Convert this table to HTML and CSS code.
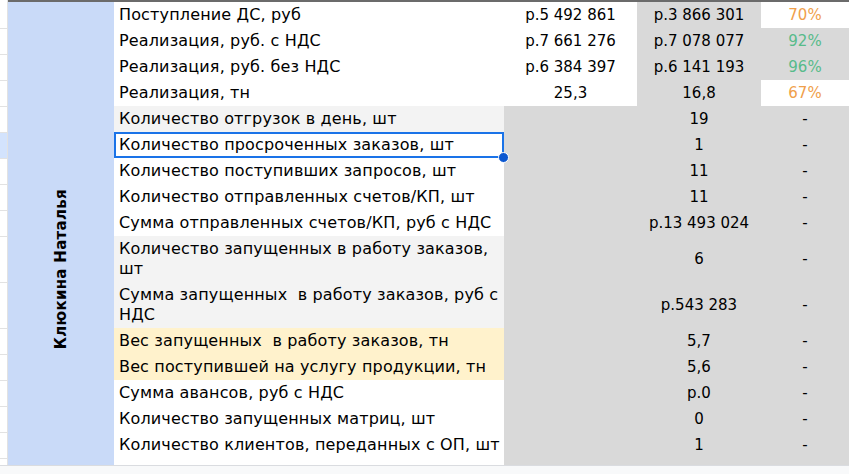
FILE: index.html
```html
<!DOCTYPE html>
<html lang="ru">
<head>
  <meta charset="UTF-8">
  <title>Отчёт менеджера</title>
  <link rel="stylesheet" href="styles.css">
</head>
<body>
  <div class="sheet">
    <div class="rowhead">
      <div class="rh first"></div>
      <div class="rh"></div>
      <div class="rh"></div>
      <div class="rh"></div>
      <div class="rh"></div>
      <div class="rh active"></div>
      <div class="rh"></div>
      <div class="rh"></div>
      <div class="rh"></div>
      <div class="rh tall"></div>
      <div class="rh tall"></div>
      <div class="rh"></div>
      <div class="rh"></div>
      <div class="rh"></div>
      <div class="rh"></div>
      <div class="rh"></div>
      <div class="rh rest"></div>
    </div>

    <div class="main">
      <div class="name"><span>Клюкина Наталья</span></div>

      <!-- money / weight rows -->
      <div class="label">Поступление ДС, руб</div>
      <div class="val white">р.5 492 861</div>
      <div class="val">р.3 866 301</div>
      <div class="val white pct orange">70%</div>

      <div class="label">Реализация, руб. с НДС</div>
      <div class="val white">р.7 661 276</div>
      <div class="val">р.7 078 077</div>
      <div class="val pct green">92%</div>

      <div class="label">Реализация, руб. без НДС</div>
      <div class="val white">р.6 384 397</div>
      <div class="val">р.6 141 193</div>
      <div class="val pct green">96%</div>

      <div class="label">Реализация, тн</div>
      <div class="val white">25,3</div>
      <div class="val">16,8</div>
      <div class="val white pct orange">67%</div>

      <!-- daily counters -->
      <div class="label light">Количество отгрузок в день, шт</div>
      <div class="val"></div>
      <div class="val">19</div>
      <div class="val">-</div>

      <div class="label selected">Количество просроченных заказов, шт<i class="handle"></i></div>
      <div class="val"></div>
      <div class="val">1</div>
      <div class="val">-</div>

      <div class="label">Количество поступивших запросов, шт</div>
      <div class="val"></div>
      <div class="val">11</div>
      <div class="val">-</div>

      <div class="label">Количество отправленных счетов/КП, шт</div>
      <div class="val"></div>
      <div class="val">11</div>
      <div class="val">-</div>

      <div class="label">Сумма отправленных счетов/КП, руб с НДС</div>
      <div class="val"></div>
      <div class="val">р.13 493 024</div>
      <div class="val">-</div>

      <div class="label light">Количество запущенных в работу заказов,<br>шт</div>
      <div class="val"></div>
      <div class="val">6</div>
      <div class="val">-</div>

      <div class="label light">Сумма запущенных &nbsp;в работу заказов, руб с<br>НДС</div>
      <div class="val"></div>
      <div class="val">р.543 283</div>
      <div class="val">-</div>

      <div class="label yellow">Вес запущенных &nbsp;в работу заказов, тн</div>
      <div class="val"></div>
      <div class="val">5,7</div>
      <div class="val">-</div>

      <div class="label yellow">Вес поступившей на услугу продукции, тн</div>
      <div class="val"></div>
      <div class="val">5,6</div>
      <div class="val">-</div>

      <div class="label">Сумма авансов, руб с НДС</div>
      <div class="val"></div>
      <div class="val">р.0</div>
      <div class="val">-</div>

      <div class="label">Количество запущенных матриц, шт</div>
      <div class="val"></div>
      <div class="val">0</div>
      <div class="val">-</div>

      <div class="label">Количество клиентов, переданных с ОП, шт</div>
      <div class="val"></div>
      <div class="val">1</div>
      <div class="val">-</div>

      <div class="label"></div>
      <div class="val"></div>
      <div class="val"></div>
      <div class="val"></div>
    </div>
  </div>
  <div class="hscroll"></div>
</body>
</html>
```

FILE: styles.css
```css
body {
  margin: 0;
  width: 849px;
  height: 474px;
  overflow: hidden;
  background: #fff;
  font-family: "DejaVu Sans", "Open Sans", sans-serif;
  font-size: 15px;
  color: #000;
}

.sheet {
  display: flex;
  height: 465px;
}

/* narrow column on the left with plain grid lines */
.rowhead {
  width: 8px;
  flex: none;
  border-right: 1px solid #e2e2e2;
  box-sizing: border-box;
}

.rh {
  height: 26px;
  border-bottom: 1px solid #e2e2e2;
  box-sizing: border-box;
}

.rh.first {
  height: 29px;
}

.rh.tall {
  height: 46px;
}

.rh.active {
  background: #d3e3fd;
}

.rh.rest {
  height: 6px;
  border-bottom: none;
}

.main {
  flex: 1;
  display: grid;
  grid-template-columns: 106px 390px 133px 124px 88px;
  grid-template-rows: repeat(9, 26px) 46px 46px repeat(5, 26px) 7px;
  border-top: 2px solid #6b6b6b;
  overflow: hidden;
}

.name {
  grid-row: 1 / -1;
  background: #c9daf8;
  display: flex;
  align-items: center;
  justify-content: center;
  padding-top: 71px;
}

.name span {
  writing-mode: vertical-rl;
  transform: rotate(180deg);
  font-weight: bold;
  letter-spacing: 0.3px;
  white-space: nowrap;
}

.label {
  position: relative;
  display: flex;
  align-items: center;
  padding: 0 4px 0 5px;
  font-size: 16px;
  letter-spacing: 0.15px;
  line-height: 20px;
  white-space: nowrap;
  background: #fff;
}

.label.light {
  background: #f3f3f3;
}

.label.yellow {
  background: #fff2cc;
}

.label.selected {
  box-shadow: inset 0 0 0 2px #1a73e8;
}

.handle {
  position: absolute;
  right: -5px;
  bottom: -5px;
  width: 9px;
  height: 9px;
  border-radius: 50%;
  background: #0b57d0;
  border: 1px solid #fff;
  z-index: 2;
}

.val {
  display: flex;
  align-items: center;
  justify-content: center;
  background: #d9d9d9;
  white-space: nowrap;
}

.val.white {
  background: #fff;
}

.pct.orange {
  color: #f0a04b;
}

.pct.green {
  color: #57bb8a;
}

.hscroll {
  height: 9px;
  background: #f8f9fa;
  border-top: 1px solid #dadce0;
  box-sizing: border-box;
}
```
